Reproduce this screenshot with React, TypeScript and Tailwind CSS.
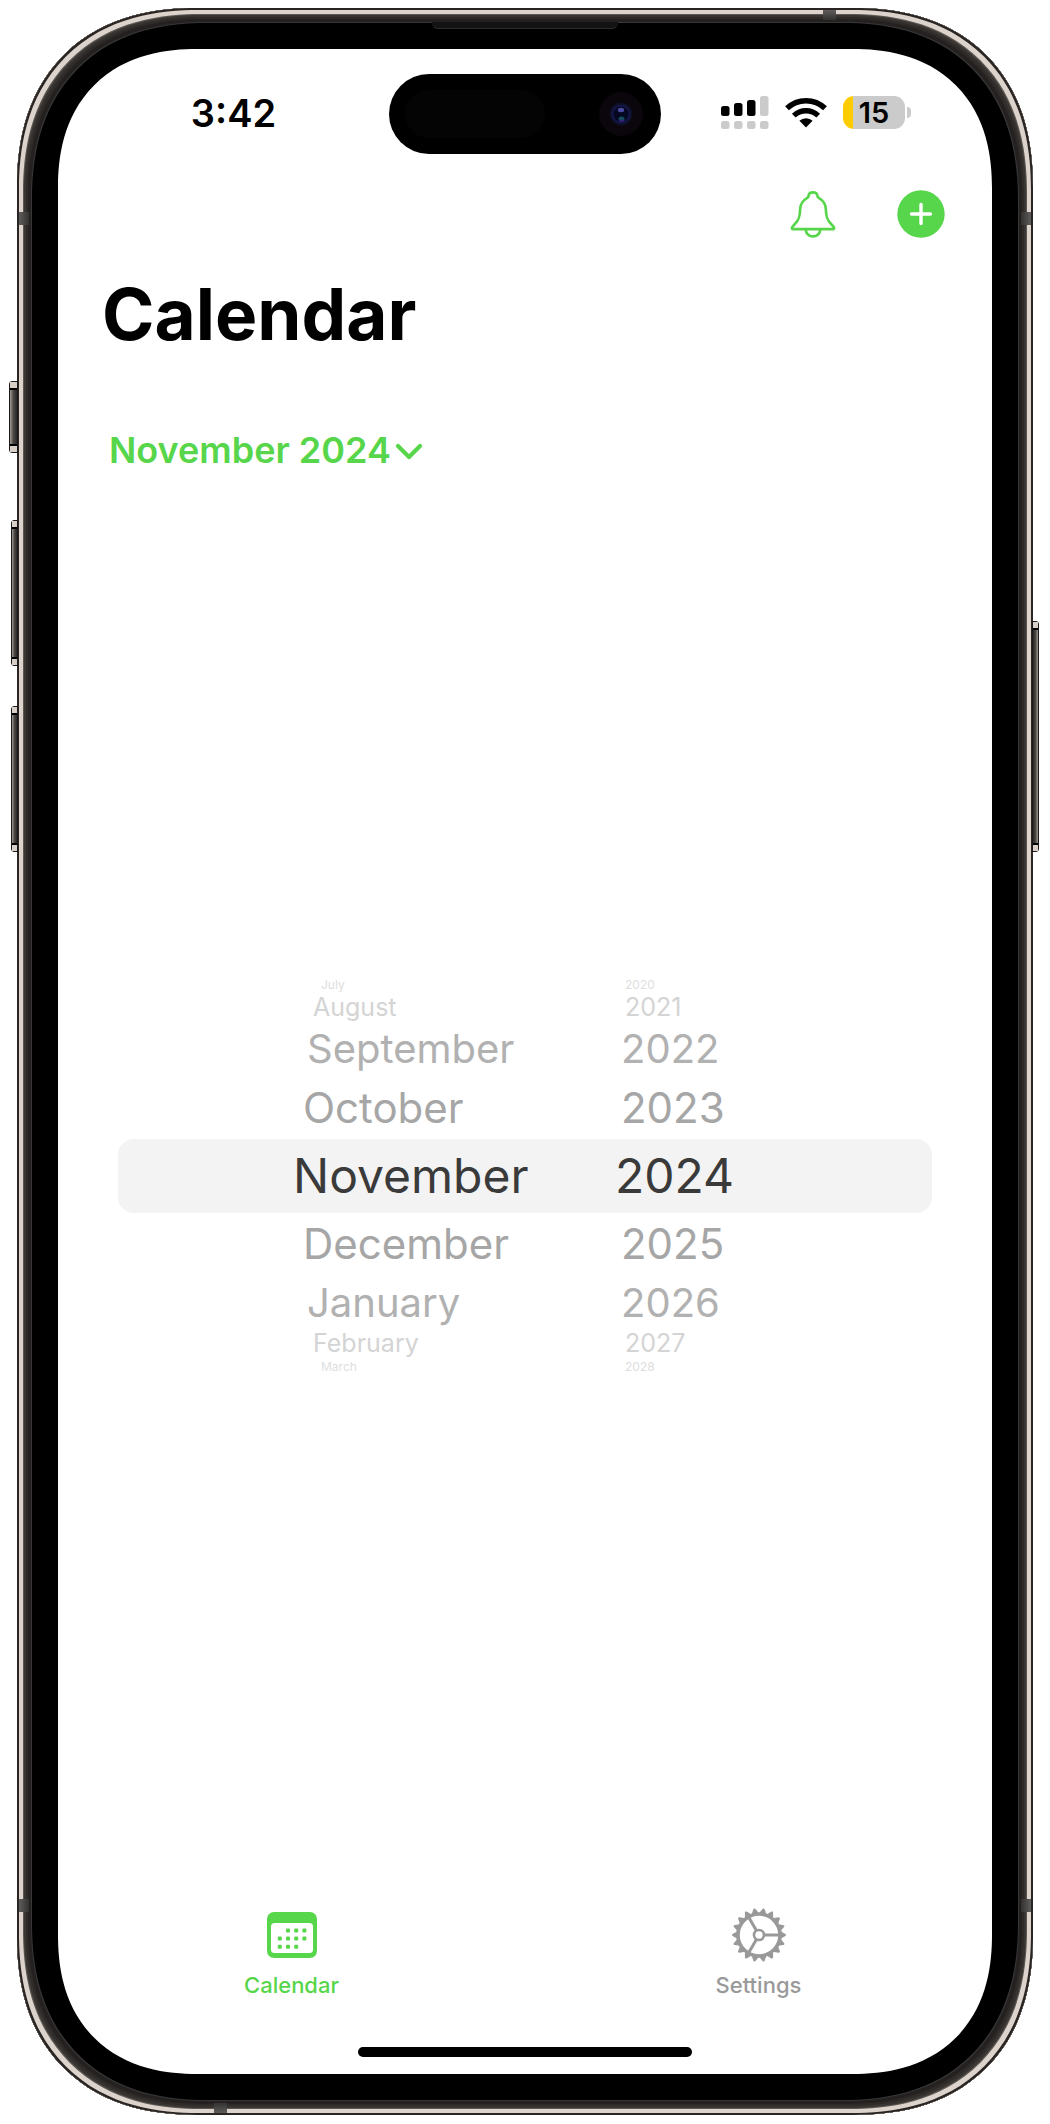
import React, { useState } from "react";

type WheelRow = { month: string; year: string };

const rows: WheelRow[] = [
  { month: "July", year: "2020" },
  { month: "August", year: "2021" },
  { month: "September", year: "2022" },
  { month: "October", year: "2023" },
  { month: "November", year: "2024" },
  { month: "December", year: "2025" },
  { month: "January", year: "2026" },
  { month: "February", year: "2027" },
  { month: "March", year: "2028" },
];

/* Row looks by distance from the selected row. */
const rowStyles = [
  "h-[74px] text-[48px] text-[#3a3a3a]",
  "h-[62px] pl-2.5 text-[42px] text-[#a6a6a6]",
  "h-[56px] pl-3.5 text-[40px] text-[#b1b1b1]",
  "h-[26px] pl-5 text-[25px] text-[#d4d4d4]",
  "h-5 pl-7 text-[12px] text-[#dedede]",
];
const yearStyles = [
  "h-[74px] text-[48px] text-[#3a3a3a]",
  "h-[62px] pl-1.5 text-[42px] text-[#a6a6a6]",
  "h-[56px] pl-1.5 text-[40px] text-[#b1b1b1]",
  "h-[26px] pl-2.5 text-[25px] text-[#d4d4d4]",
  "h-5 pl-2.5 text-[12px] text-[#dedede]",
];

function Column({
  label,
  items,
  styles,
  className,
}: {
  label: string;
  items: string[];
  styles: string[];
  className: string;
}) {
  return (
    <div role="listbox" aria-label={label} className={`flex flex-col ${className}`}>
      {items.map((item, i) => {
        const distance = Math.abs(i - 4);
        return (
          <button
            key={item}
            type="button"
            role="option"
            aria-selected={distance === 0}
            className={`flex items-center whitespace-nowrap leading-none ${styles[distance]}`}
          >
            {item}
          </button>
        );
      })}
    </div>
  );
}

function BellIcon() {
  return (
    <svg viewBox="0 0 48 48" className="size-12" fill="none" stroke="currentColor" strokeWidth="2.7" strokeLinejoin="round">
      <path d="M24 2.300c-2.500 0-4.300 1.500-4.400 3.500 0 1.300-.7 1.900-2 2.600C13.200 10.800 11.300 14.500 11.100 20c-.2 7.200-1.300 10-4.700 13.400L3.600 36.700c-1.200 1.400-.8 2.400.9 2.400h39c1.700 0 2.100-1 .9-2.400l-2.800-3.300c-3.400-3.400-4.500-6.200-4.700-13.400-.2-5.500-2.100-9.200-6.500-11.600-1.300-.7-2-1.300-2-2.600C28.300 3.800 26.500 2.300 24 2.300Z" />
      <path d="M16.800 39.500c0 4 3.200 6.800 7.200 6.800s7.200-2.800 7.200-6.800" />
    </svg>
  );
}

function PlusIcon() {
  return (
    <svg viewBox="0 0 48 48" className="size-12">
      <circle cx="24" cy="24" r="23.700" fill="currentColor" />
      <path d="M24 14.500v19M14.500 24h19" stroke="white" strokeWidth="3.400" strokeLinecap="round" />
    </svg>
  );
}

function SignalIcon() {
  return (
    <svg viewBox="0 0 48 33" className="h-[33px] w-12">
      <rect x="0" y="10" width="8.500" height="10" rx="2.500" />
      <rect x="13" y="7" width="8.500" height="13" rx="2.500" />
      <rect x="26" y="4" width="8.500" height="16" rx="2.500" />
      <g fill="#cbcbcb">
        <rect x="39" y="0" width="8.500" height="20" rx="2.500" />
        <rect x="0" y="25" width="8.500" height="8" rx="2.500" />
        <rect x="13" y="25" width="8.500" height="8" rx="2.500" />
        <rect x="26" y="25" width="8.500" height="8" rx="2.500" />
        <rect x="39" y="25" width="8.500" height="8" rx="2.500" />
      </g>
    </svg>
  );
}

function WifiIcon() {
  return (
    <svg viewBox="0 0 42 31" className="h-[31px] w-[42px]">
      <g fill="none" stroke="black" strokeWidth="5.400">
        <path d="M2 11.300a27.500 27.500 0 0 1 38 0" />
        <path d="M8.800 18.600a17.700 17.700 0 0 1 24.400 0" />
      </g>
      <path d="M21 30.500 14.400 23.800a9.800 9.800 0 0 1 13.200 0Z" />
    </svg>
  );
}

function CalendarIcon() {
  const dots = [
    [21, 18.500], [29.200, 18.500], [37.400, 18.500],
    [12.800, 26.500], [21, 26.500], [29.200, 26.500], [37.400, 26.500],
    [12.800, 34.700], [21, 34.700], [29.200, 34.700],
  ];
  return (
    <svg viewBox="-2 -4 54 54" className="size-[54px]" fill="currentColor">
      <path
        fillRule="evenodd"
        d="M7 0h36a7 7 0 0 1 7 7v32a7 7 0 0 1-7 7H7a7 7 0 0 1-7-7V7a7 7 0 0 1 7-7Zm.5 11A3.500 3.500 0 0 0 4 14.500v23A3.500 3.500 0 0 0 7.500 41h35a3.500 3.500 0 0 0 3.500-3.500v-23a3.500 3.500 0 0 0-3.500-3.500Z"
      />
      {dots.map(([x, y]) => (
        <rect key={`${x}-${y}`} x={x - 2} y={y - 2} width="4" height="4" rx="1" />
      ))}
    </svg>
  );
}

function GearIcon() {
  const teeth = Array.from({ length: 18 }, (_, i) => i * 20);
  return (
    <svg viewBox="-27 -27 54 54" className="size-[54px]">
      {teeth.map((a) => (
        <path key={a} d="M21.500-3.700 26-1.300Q27-.9 27 0T26 1.300L21.500 3.700Z" fill="currentColor" transform={`rotate(${a})`} />
      ))}
      <g fill="none" stroke="currentColor">
        <circle r="21" strokeWidth="3.600" />
        <circle r="5" strokeWidth="2.700" />
        {[0, 120, 240].map((a) => (
          <path key={a} d="M5.500 0H20" strokeWidth="3" transform={`rotate(${a})`} />
        ))}
      </g>
    </svg>
  );
}

const bezelButton =
  "absolute border border-[#1b1817] bg-gradient-to-r from-[#a39b94] via-[#4a4643] to-[#2a2726]";
const buttonCaps =
  "flex flex-col justify-between before:block before:h-2 before:border-b-2 before:border-black before:bg-[#d8cfc8] after:block after:h-2 after:border-t-2 after:border-black after:bg-[#d8cfc8]";

function Chassis() {
  return (
    <div aria-hidden="true">
      <span className={`${bezelButton} ${buttonCaps} -left-2 top-[373px] h-[72px] w-[9px] rounded-l-[3px]`} />
      <span className={`${bezelButton} ${buttonCaps} -left-1.5 top-[512px] h-[146px] w-[7px] rounded-l-[3px]`} />
      <span className={`${bezelButton} ${buttonCaps} -left-1.5 top-[698px] h-[146px] w-[7px] rounded-l-[3px]`} />
      <span className={`${bezelButton} ${buttonCaps} -right-1.5 top-[613px] h-[231px] w-[7px] rotate-180 rounded-l-[3px]`} />
      <span className="absolute left-0.5 top-[204px] h-[13px] w-2.5 bg-gradient-to-r from-[#5f5e5d] to-[#333231]" />
      <span className="absolute right-0.5 top-[204px] h-[13px] w-2.5 bg-gradient-to-l from-[#5f5e5d] to-[#333231]" />
      <span className="absolute bottom-[203px] left-0.5 h-[13px] w-2.5 bg-gradient-to-r from-[#5f5e5d] to-[#333231]" />
      <span className="absolute bottom-[203px] right-0.5 h-[13px] w-2.5 bg-gradient-to-l from-[#5f5e5d] to-[#333231]" />
      <span className="absolute right-[197px] top-0.5 h-2.5 w-[13px] bg-gradient-to-b from-[#5f5e5d] to-[#333231]" />
      <span className="absolute bottom-0.5 left-[197px] h-2.5 w-[13px] bg-gradient-to-t from-[#5f5e5d] to-[#333231]" />
      <span className="absolute left-1/2 top-3.5 h-[7px] w-[186px] -translate-x-1/2 rounded-b-md border-b border-[#2c2c2c] bg-[#131313]" />
    </div>
  );
}

function StatusBar() {
  return (
    <div className="grid grid-cols-[1fr_272px_1fr] items-center pt-[25px]">
      <div className="pb-0.5 pl-5 text-center text-[38px] font-semibold leading-none text-black">3:42</div>
      <div className="flex h-20 items-center justify-between rounded-full bg-black pl-4 pr-[18px]">
        <div className="h-12 w-[140px] rounded-full bg-[#040404]" />
        <div className="flex size-11 items-center justify-center rounded-full bg-[#0a060b]">
          <svg viewBox="0 0 24 24" className="size-6">
            <circle cx="12" cy="12" r="11.500" fill="#0e0f24" />
            <circle cx="12" cy="12" r="8.500" fill="#060822" stroke="#171a55" strokeWidth="1.500" />
            <ellipse cx="12" cy="8" rx="3.200" ry="2.200" fill="#4a4a9e" />
            <ellipse cx="12.500" cy="17" rx="3" ry="2.500" fill="#10505a" />
            <ellipse cx="12.500" cy="18.500" rx="2" ry="1" fill="#4a1684" />
          </svg>
        </div>
      </div>
      <div className="flex items-center justify-end gap-4 pb-1 pr-[81px]">
        <SignalIcon />
        <WifiIcon />
        <div className="flex items-center gap-0.5">
          <div className="flex h-[33px] w-[62px] items-center justify-center rounded-[11px] bg-[linear-gradient(to_right,#ffcc00_10px,#cbcbcb_10px)] text-[29px] font-semibold leading-none text-black">
            15
          </div>
          <div className="h-[11px] w-1 rounded-r-full bg-[#cbcbcb]" />
        </div>
      </div>
    </div>
  );
}

export default function App() {
  const [tab, setTab] = useState("calendar");
  return (
    <div className="flex min-h-screen flex-col bg-white px-[17px] pb-[9px] pt-2 font-['Inter',sans-serif]">
      <div className="relative flex grow flex-col">
        <Chassis />
        <div className="flex grow flex-col rounded-[180px] bg-black p-[41px] shadow-[inset_0_0_0_2px_#2a2522,inset_0_0_0_6px_#dcd3cc,inset_0_0_0_7px_#5c5752,inset_0_0_0_9px_#383532,inset_0_0_0_11px_#2e2b29,inset_0_0_0_14px_#242120,inset_0_0_0_15px_#363636] [corner-shape:superellipse(1.2)]">
          <div className="flex grow flex-col rounded-[139px] bg-white [corner-shape:superellipse(1.2)]">
            <StatusBar />

            <header>
              <div className="mt-9 flex justify-end gap-[60px] pr-[47px] text-[#57d64b]">
                <button type="button" aria-label="Notifications">
                  <BellIcon />
                </button>
                <button type="button" aria-label="Add event">
                  <PlusIcon />
                </button>
              </div>
              <h1 className="mt-9 pl-11 text-[71px] font-bold leading-[80px] text-black">Calendar</h1>
            </header>

            <button
              type="button"
              aria-expanded="true"
              className="ml-[51px] mt-[76px] flex items-center gap-1 self-start text-[36px] font-semibold leading-10 text-[#57d64b]"
            >
              November 2024
              <svg viewBox="0 0 28 20" className="mt-1 h-5 w-7" fill="none" stroke="currentColor" strokeWidth="4.200" strokeLinecap="round" strokeLinejoin="round">
                <path d="M3 4l11 11L25 4" />
              </svg>
            </button>

            <main className="flex grow flex-col justify-center px-[60px]">
              <div className="grid grid-cols-1 items-center">
                <div className="col-start-1 row-start-1 h-[74px] rounded-[16px] bg-[#f3f3f3]" />
                <div className="col-start-1 row-start-1 flex pl-[175px]">
                  <Column label="Month" items={rows.map((r) => r.month)} styles={rowStyles} className="w-[322px]" />
                  <Column label="Year" items={rows.map((r) => r.year)} styles={yearStyles} className="grow" />
                </div>
              </div>
            </main>

            <nav className="grid grid-cols-2 pt-[27px] text-[22px] font-medium leading-7">
              <button
                type="button"
                aria-current={tab === "calendar" ? "page" : undefined}
                onClick={() => setTab("calendar")}
                className={`flex flex-col items-center gap-[9px] ${tab === "calendar" ? "text-[#57d64b]" : "text-[#999999]"}`}
              >
                <CalendarIcon />
                Calendar
              </button>
              <button
                type="button"
                aria-current={tab === "settings" ? "page" : undefined}
                onClick={() => setTab("settings")}
                className={`flex flex-col items-center gap-[9px] ${tab === "settings" ? "text-[#57d64b]" : "text-[#999999]"}`}
              >
                <GearIcon />
                Settings
              </button>
            </nav>
            <div className="mx-auto mb-[17px] mt-12 h-2.5 w-[334px] rounded-full bg-black" />
          </div>
        </div>
      </div>
    </div>
  );
}
